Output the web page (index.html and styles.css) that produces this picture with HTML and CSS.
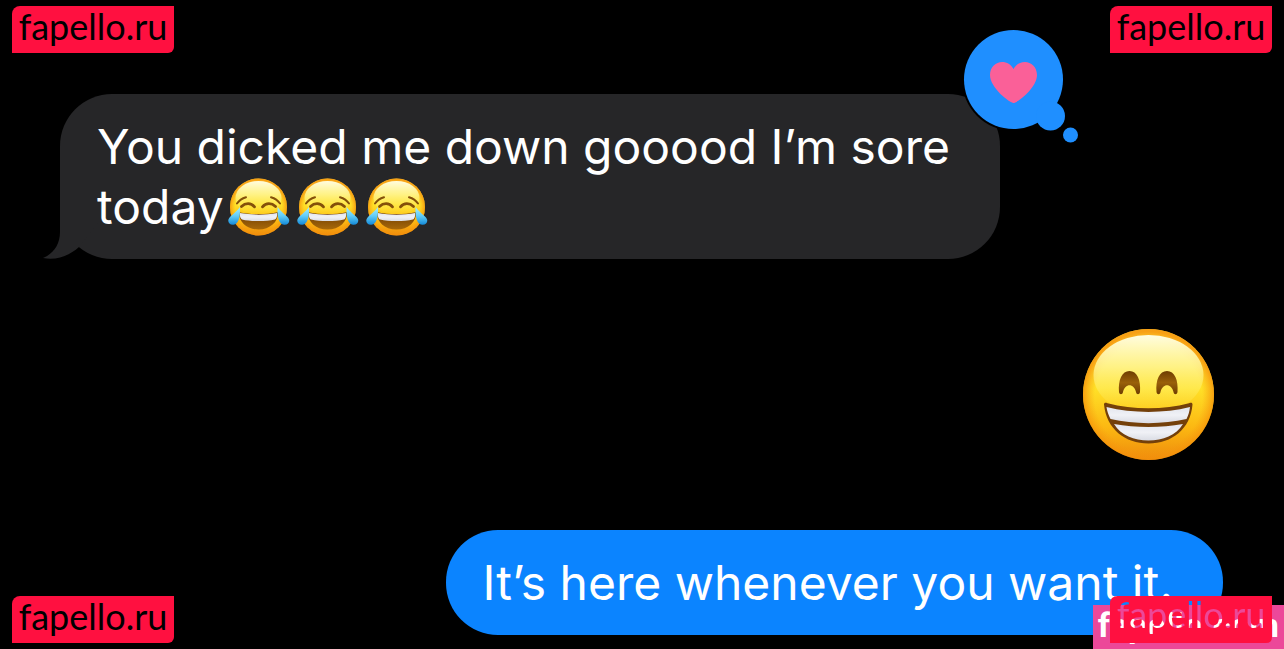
FILE: index.html
```
<!DOCTYPE html>
<html lang="en">
<head>
    <meta charset="UTF-8">
    <meta name="viewport" content="width=device-width, initial-scale=1">
    <title>Messages</title>
    <link rel="stylesheet" href="styles.css">
</head>
<body>
    <!-- shared emoji artwork -->
    <svg class="defs" width="0" height="0" aria-hidden="true">
        <defs>
            <linearGradient id="face" x1="0" y1="0" x2="0" y2="1">
                <stop offset="0" stop-color="#ffd83a"/>
                <stop offset="0.45" stop-color="#ffe128"/>
                <stop offset="0.75" stop-color="#fcb812"/>
                <stop offset="1" stop-color="#ee8b0c"/>
            </linearGradient>
            <radialGradient id="edge" cx="0.5" cy="0.52" r="0.5">
                <stop offset="0.82" stop-color="#f79a10" stop-opacity="0"/>
                <stop offset="1" stop-color="#f58d08" stop-opacity="0.75"/>
            </radialGradient>
            <linearGradient id="shine" x1="0" y1="0" x2="0" y2="1">
                <stop offset="0" stop-color="#fffde0"/>
                <stop offset="0.4" stop-color="#fff79a" stop-opacity="0.8"/>
                <stop offset="1" stop-color="#ffec50" stop-opacity="0"/>
            </linearGradient>
            <linearGradient id="tear" x1="0" y1="0" x2="0" y2="1">
                <stop offset="0" stop-color="#a5eeff"/>
                <stop offset="0.5" stop-color="#62cdf8"/>
                <stop offset="1" stop-color="#1289d8"/>
            </linearGradient>
            <linearGradient id="mouth" x1="0" y1="0" x2="0" y2="1">
                <stop offset="0" stop-color="#6b3a02"/>
                <stop offset="1" stop-color="#a8690a"/>
            </linearGradient>
            <linearGradient id="teeth" x1="0" y1="0" x2="0" y2="1">
                <stop offset="0" stop-color="#e2e5ee"/>
                <stop offset="0.5" stop-color="#f0f1f6"/>
                <stop offset="1" stop-color="#dadce4"/>
            </linearGradient>
            <linearGradient id="eye" x1="0" y1="0" x2="0" y2="1">
                <stop offset="0" stop-color="#6e3d02"/>
                <stop offset="0.5" stop-color="#99600a"/>
                <stop offset="1" stop-color="#6e3d02"/>
            </linearGradient>
            <symbol id="joy" viewBox="0 0 62 58">
                <circle cx="30.5" cy="29" r="28.5" fill="url(#face)"/>
                <circle cx="30.5" cy="29" r="28.5" fill="url(#edge)"/>
                <ellipse cx="30.5" cy="20" rx="23" ry="17" fill="url(#shine)"/>
                <g fill="none" stroke="#84500a" stroke-linecap="round">
                    <path stroke-width="2" d="M9 25.5C11 22.5 14 20.3 18 19.2M52 25.5C50 22.5 47 20.3 43 19.2"/>
                    <path stroke-width="2.8" d="M13.5 28.5C17.5 24.6 23 24.6 26.5 28.8M47.5 28.5C43.5 24.6 38 24.6 34.5 28.8"/>
                </g>
                <path d="M11 34.200C23 36.7 38 36.7 50 34.200C50.500 43.5 42.500 51.5 30.500 51.5S10.500 43.5 11 34.200Z" fill="url(#mouth)"/>
                <path d="M12 35C24 37.2 37 37.2 49 35C49.500 38 48.500 41 47 41.4C38 43.6 23 43.6 14 41.4C12.500 41 11.500 38 12 35Z" fill="url(#teeth)"/>
                <path d="M11.8 29C12.5 36 11.5 45.8 5.5 46.8C0.5 47.3-1.4 42.5 2 39C4.7 36.2 8.5 34 11.8 29Z" fill="url(#tear)"/>
                <path d="M49.7 29C49 36 50 45.8 56 46.8C61 47.3 63 42.5 59.500 39C56.800 36.2 53 34 49.7 29Z" fill="url(#tear)"/>
            </symbol>
            <symbol id="grin" viewBox="0 0 131 131">
                <circle cx="65.5" cy="65.5" r="65.5" fill="url(#face)"/>
                <circle cx="65.5" cy="65.5" r="65.5" fill="url(#edge)"/>
                <ellipse cx="65.5" cy="46" rx="55" ry="40" fill="url(#shine)"/>
                <path d="M36 63C35 51 39 42 46.5 42S58 51 57 63C56.5 66 53.5 66 53 63C51 54 42 54 40 63C39.5 66 36.5 66 36 63Z" fill="url(#eye)"/>
                <path d="M73.5 63C72.5 51 76.5 42 84 42S95.5 51 94.5 63C94 66 91 66 90.5 63C88.5 54 79.5 54 77.5 63C77 66 74 66 73.5 63Z" fill="url(#eye)"/>
                <path d="M21 75.5C21 73.5 22.5 73.5 24.5 74.2C50 81 81 81 106 74.2C108 73.5 109.5 73.5 109.5 75.5C107.5 100 89 114.5 65.5 114.5S23.5 100 21 75.5Z" fill="#74400a"/>
                <path d="M23.5 78C50 84.5 81 84.5 107 78C106.5 83 105 87 103.5 90C80 95.5 51 95.5 27.5 90C25.5 86 24 82 23.5 78Z" fill="url(#teeth)"/>
                <path d="M31 95C53 99 78 99 100 95C93 106.5 80 111.5 65.5 111.5S38 106.5 31 95Z" fill="url(#teeth)"/>
            </symbol>
        </defs>
    </svg>

    <main class="chat">
        <div class="bubble received">
            <svg class="tail" viewBox="0 0 69 54" aria-hidden="true">
                <path d="M17 0V27C17 40 10 49 0 53C14 56 27 50 36 42L69 0Z"/>
            </svg>
            <p class="text">You dicked me down gooood I’m sore today<span class="emojis"><svg class="emoji" role="img" aria-label="Tears of joy"><use href="#joy"/></svg><svg class="emoji" role="img" aria-label="Tears of joy"><use href="#joy"/></svg><svg class="emoji" role="img" aria-label="Tears of joy"><use href="#joy"/></svg></span></p>
            <svg class="reaction" viewBox="0 0 120 118" role="img" aria-label="Loved">
                <g fill="#1f8fff">
                    <circle cx="53.5" cy="51.5" r="51.5" fill="#000"/>
                    <circle cx="53.5" cy="51.5" r="49.5"/>
                    <circle cx="90.5" cy="88" r="14.5"/>
                    <circle cx="110.5" cy="107" r="7.5"/>
                </g>
                <path fill="#fa6098" d="M53.5 75C50 75 30 60 30 47C30 39 36 34 42 34C47 34 51 36.5 53.5 41C56 36.5 60 34 65 34C71 34 77 39 77 47C77 60 57 75 53.5 75Z"/>
            </svg>
        </div>

        <svg class="big-emoji" role="img" aria-label="Beaming face"><use href="#grin"/></svg>

        <div class="bubble sent">
            <p class="text">It’s here whenever you want it.</p>
        </div>
    </main>

    <div class="mark top left">fapello.ru</div>
    <div class="mark top right">fapello.ru</div>
    <div class="mark bottom left">fapello.ru</div>
    <div class="site-tag">fapello.com</div>

    <!-- label with see-through letters, the tag below shows through -->
    <svg class="cutout bottom right" viewBox="0 0 162 47" role="img" aria-label="fapello.ru">
        <mask id="letters">
            <rect width="162" height="47" fill="#fff"/>
            <text class="cutout-text" x="81" y="32" text-anchor="middle">fapello.ru</text>
        </mask>
        <path d="M8 0H162V41Q162 47 156 47H0V8Q0 0 8 0Z" fill="#ff1040" mask="url(#letters)"/>
    </svg>
</body>
</html>
```
FILE: styles.css
```
:root {
    --received: #262628;
    --sent: #0b84ff;
    --mark-red: #ff1040;
    --tag-pink: #ec4899;
}
* {
    margin: 0;
    padding: 0;
    box-sizing: border-box;
}
body {
    position: relative;
    min-height: 100vh;
    background-color: #000;
    color: #fff;
    font-family: Inter, sans-serif;
}
.defs {
    position: absolute;
}
.chat {
    display: flex;
    flex-direction: column;
    gap: 70px;
    padding: 94px 61px 14px 60px;
}
.bubble {
    position: relative;
    padding: 23px 37px 22px;
    border-radius: 52px;
}
.text {
    position: relative;
    font-size: 48px;
    line-height: 60px;
}
.received {
    align-self: flex-start;
    max-width: 940px;
    background-color: var(--received);
}
.sent {
    align-self: flex-end;
    padding-right: 50px;
    background-color: var(--sent);
}
.emojis {
    display: inline-flex;
    gap: 7px;
    margin: -8px 0 -8px 4px;
    vertical-align: -12px;
}
.emoji {
    width: 62px;
    height: 58px;
}
.big-emoji {
    align-self: flex-end;
    width: 131px;
    height: 131px;
    margin-right: 9px;
}
.tail {
    position: absolute;
    left: -17px;
    bottom: 0;
    width: 69px;
    height: 54px;
    fill: var(--received);
}
.reaction {
    position: absolute;
    top: -66px;
    right: -80px;
    width: 120px;
    height: 118px;
    overflow: visible;
}
.mark,
.cutout {
    position: absolute;
    width: 162px;
    height: 47px;
}
.mark {
    border-radius: 8px 0 6px 0;
    background-color: var(--mark-red);
    color: #000;
    font-family: Lato, sans-serif;
    font-size: 36px;
    line-height: 40px;
    text-align: center;
}
.cutout-text {
    font-family: Lato, sans-serif;
    font-size: 36px;
}
.top { top: 6px; }
.bottom { bottom: 6px; }
.left { left: 12px; }
.right { right: 12px; }
.site-tag {
    position: absolute;
    right: 0;
    bottom: 0;
    height: 44px;
    padding: 0 5px;
    background-color: var(--tag-pink);
    font-family: Roboto, sans-serif;
    font-size: 34px;
    font-weight: 700;
    line-height: 40px;
}
```
